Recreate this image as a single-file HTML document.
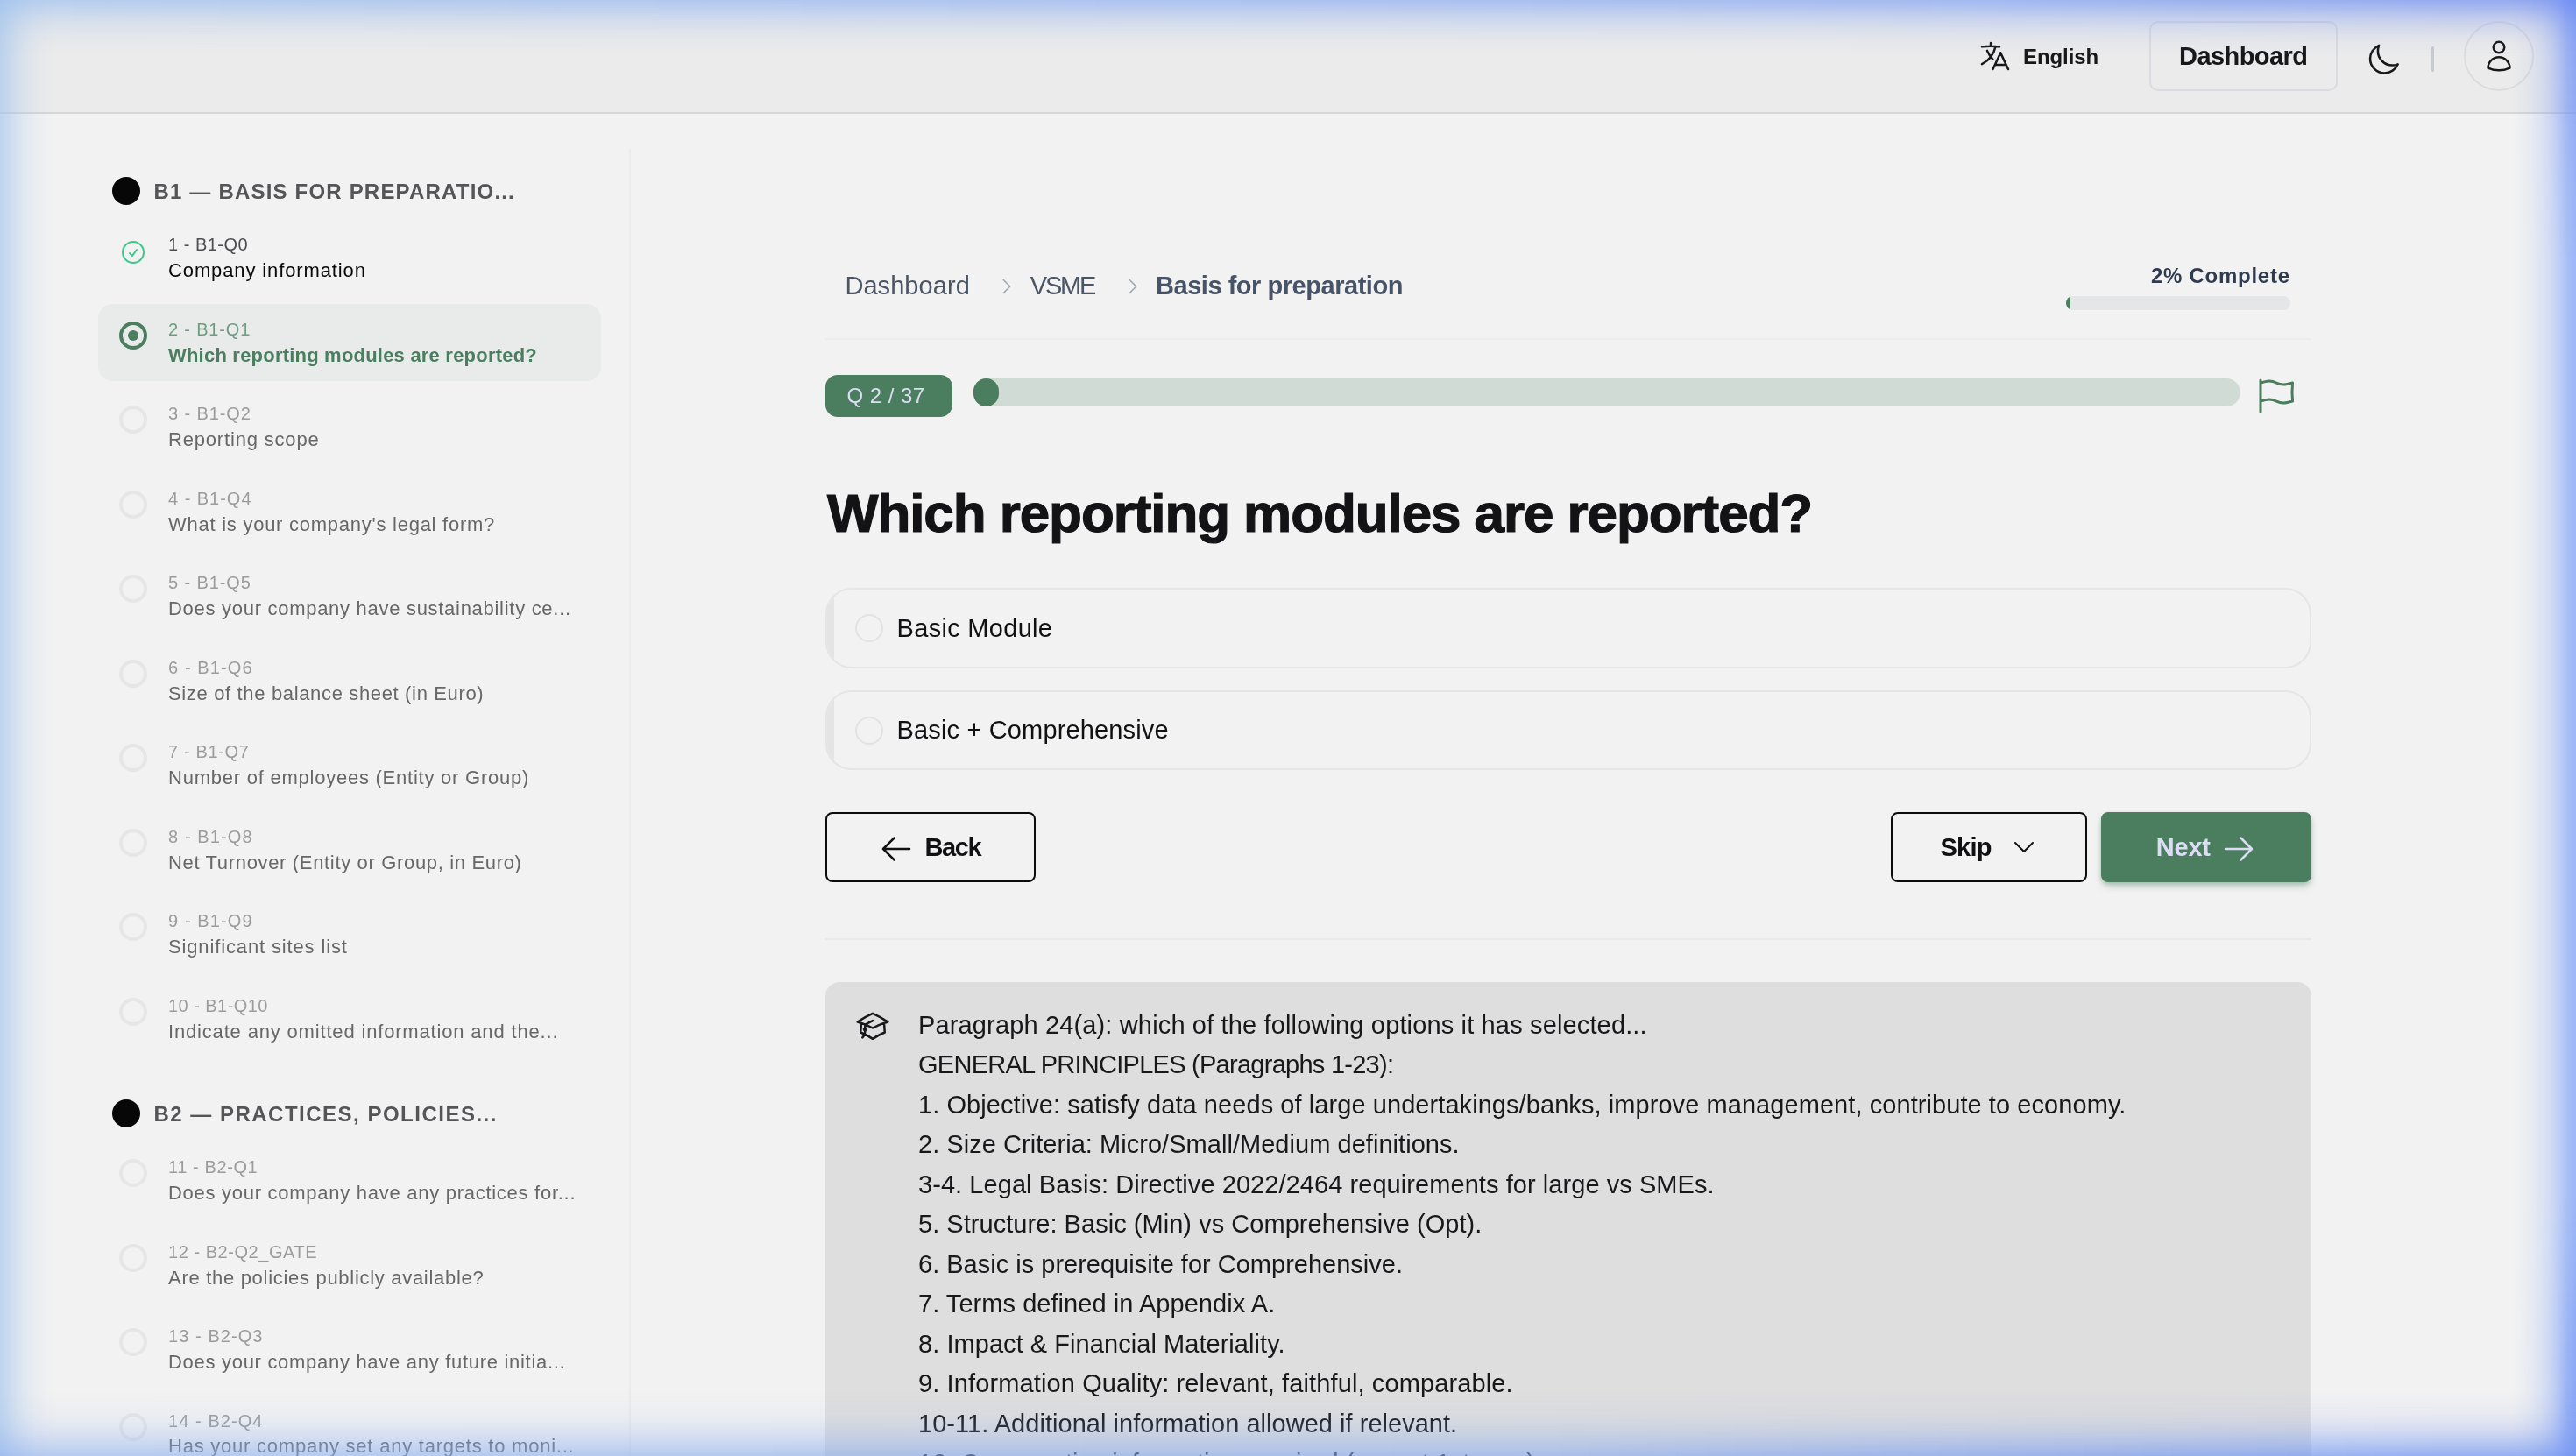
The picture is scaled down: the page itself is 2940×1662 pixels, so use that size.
<!DOCTYPE html>
<html lang="en">
<head>
<meta charset="utf-8">
<title>VSME – Basis for preparation</title>
<style>
*{box-sizing:border-box;margin:0;padding:0}
html,body{width:2940px;height:1662px;overflow:hidden}
html{background:#f2f2f2}
@media (max-width:1600px){html{zoom:.5}}
body{opacity:.9999;background:#f2f2f2;font-family:"Liberation Sans",Arial,sans-serif;color:#111;position:relative}
svg{display:block;fill:none;stroke:currentColor;stroke-linecap:round;stroke-linejoin:round;stroke-width:1.5}
.abs{position:absolute}
.t{position:absolute;white-space:nowrap}

/* header */
#hdr{position:absolute;left:0;top:0;width:2940px;height:130px;background:#ebebeb;border-bottom:2px solid #d6d6d9}
#lang{left:2310px;top:49px;font-size:24px;font-weight:700;color:#18181b;line-height:30px}
#dashbtn{position:absolute;left:2453px;top:24px;width:215px;height:80px;border:2px solid #dadbe0;border-radius:10px}
#dashtxt{left:2488px;top:46px;font-size:29px;font-weight:700;color:#18181b;line-height:36px}
#vsep{position:absolute;left:2775px;top:53px;width:3px;height:29px;background:#c6c9d6;border-radius:2px}
#avatar{position:absolute;left:2812px;top:24px;width:80px;height:80px;border:2px solid #dcdcde;border-radius:50%}

/* sidebar */
#sideline{position:absolute;left:718px;top:170px;width:2px;height:1500px;background:#ebebeb}
.sec{position:absolute;left:128px;width:32px;height:32px;border-radius:50%;background:#070707}
.sect{left:176px;font-size:24px;font-weight:700;color:#555558;line-height:32px}
.it{position:absolute;left:112px;width:574px;height:88px;border-radius:16px}
.it.on{background:#e9ebea}
.it .c{position:absolute;left:24px;top:20px;width:32px;height:32px;border-radius:50%;border:4px solid #e6e6e6}
.it.on .c{border-color:#4b7d5f}
.it.on .c:after{content:"";position:absolute;left:6px;top:6px;width:12px;height:12px;border-radius:50%;background:#4b7d5f}
.it .chk{position:absolute;left:24px;top:22px;width:32px;height:32px;color:#3ec78b}
.k{left:192px;font-size:20px;line-height:30px;color:#9c9c9c}
.q{left:192px;font-size:22px;line-height:32px;color:#676767}
.k.done{color:#4e4e52}
.q.done{color:#0a0a0a}
.k.on{color:#6f9c82}
.q.on{color:#4b7d5f;font-weight:700}

/* main */
.crumb{font-size:29px;line-height:36px;color:#4b5563;top:307px}
.hr{position:absolute;left:942px;width:1696px;height:2px;background:#e8e8e8}
#badge{position:absolute;left:942px;top:428px;width:145px;height:48px;border-radius:14px;background:#4b7d5f}
#badget{left:966px;top:437px;font-size:24px;line-height:30px;color:#dcdcf5;font-weight:400}
#bar{position:absolute;left:1111px;top:432px;width:1446px;height:32px;border-radius:16px;background:#d1dbd5}
#barfill{position:absolute;left:0;top:0;width:29px;height:32px;border-radius:16px;background:#4b7d5f}
#title{left:942px;top:549.5px;font-size:62px;line-height:76px;font-weight:700;color:#131316;-webkit-text-stroke:1.2px #131316}
.opt{position:absolute;left:942px;width:1696px;height:91.5px;border:2px solid #e5e5e5;border-radius:30px;overflow:hidden}
.opt .bar{position:absolute;left:0;top:0;width:8px;height:100%;background:#e4e4e4}
.opt .r{position:absolute;left:32px;top:28px;width:32px;height:32px;border-radius:50%;border:2px solid #e2e2e2}
.optt{left:1025px;font-size:29px;line-height:36px;color:#111114}
.btn{position:absolute;top:927px;height:80px;border:2px solid #0c0c0c;border-radius:8px}
.btnt{font-size:29px;line-height:36px;font-weight:700;color:#111114;top:950px}
#nextb{background:#4b7d5f;border-color:#4b7d5f;box-shadow:0 6px 10px -2px rgba(75,125,95,.35),0 2px 4px rgba(75,125,95,.25)}
#panel{position:absolute;left:942px;top:1121px;width:1696px;height:600px;border-radius:16px;background:#dedede}
.pl{left:1049px;font-size:29px;line-height:45.5px;color:#18181b}

/* glow */


.g{position:absolute;pointer-events:none}
#gT{left:0;top:0;width:2940px;height:64px;background:linear-gradient(to right,rgba(162,194,239,.7),rgba(144,174,242,.75) 68%,rgba(119,148,240,.74) 96%);-webkit-mask-image:linear-gradient(to bottom,rgba(0,0,0,1) 0px,rgba(0,0,0,0.76) 10px,rgba(0,0,0,0.5) 20px,rgba(0,0,0,0.3) 30px,rgba(0,0,0,0.15) 40px,rgba(0,0,0,0.06) 50px,rgba(0,0,0,0) 64px);mask-image:linear-gradient(to bottom,rgba(0,0,0,1) 0px,rgba(0,0,0,0.76) 10px,rgba(0,0,0,0.5) 20px,rgba(0,0,0,0.3) 30px,rgba(0,0,0,0.15) 40px,rgba(0,0,0,0.06) 50px,rgba(0,0,0,0) 64px)}
#gL{left:0;top:0;width:64px;height:1662px;background:rgba(155,192,237,.6);-webkit-mask-image:linear-gradient(to right,rgba(0,0,0,1) 0px,rgba(0,0,0,0.76) 10px,rgba(0,0,0,0.5) 20px,rgba(0,0,0,0.3) 30px,rgba(0,0,0,0.15) 40px,rgba(0,0,0,0.06) 50px,rgba(0,0,0,0) 64px);mask-image:linear-gradient(to right,rgba(0,0,0,1) 0px,rgba(0,0,0,0.76) 10px,rgba(0,0,0,0.5) 20px,rgba(0,0,0,0.3) 30px,rgba(0,0,0,0.15) 40px,rgba(0,0,0,0.06) 50px,rgba(0,0,0,0) 64px)}
#gR{right:0;top:0;width:72px;height:1662px;background:linear-gradient(to bottom,rgba(100,135,245,.72),rgba(110,151,249,.65) 18%,rgba(110,151,249,.65) 82%,rgba(100,138,246,.78));-webkit-mask-image:linear-gradient(to left,rgba(0,0,0,1) 0px,rgba(0,0,0,0.85) 10px,rgba(0,0,0,0.58) 20px,rgba(0,0,0,0.37) 30px,rgba(0,0,0,0.22) 40px,rgba(0,0,0,0.12) 50px,rgba(0,0,0,0.05) 60px,rgba(0,0,0,0) 72px);mask-image:linear-gradient(to left,rgba(0,0,0,1) 0px,rgba(0,0,0,0.85) 10px,rgba(0,0,0,0.58) 20px,rgba(0,0,0,0.37) 30px,rgba(0,0,0,0.22) 40px,rgba(0,0,0,0.12) 50px,rgba(0,0,0,0.05) 60px,rgba(0,0,0,0) 72px)}
#gB{left:0;bottom:0;width:2940px;height:74px;background:linear-gradient(to right,rgba(140,175,239,.58),rgba(135,170,240,.6) 60%,rgba(115,150,242,.72) 95%);-webkit-mask-image:linear-gradient(to top,rgba(0,0,0,1) 0px,rgba(0,0,0,0.76) 10px,rgba(0,0,0,0.53) 20px,rgba(0,0,0,0.33) 30px,rgba(0,0,0,0.19) 40px,rgba(0,0,0,0.1) 50px,rgba(0,0,0,0.05) 60px,rgba(0,0,0,0) 74px);mask-image:linear-gradient(to top,rgba(0,0,0,1) 0px,rgba(0,0,0,0.76) 10px,rgba(0,0,0,0.53) 20px,rgba(0,0,0,0.33) 30px,rgba(0,0,0,0.19) 40px,rgba(0,0,0,0.1) 50px,rgba(0,0,0,0.05) 60px,rgba(0,0,0,0) 74px)}
</style>
</head>
<body>

<!-- HEADER -->
<div id="hdr">
  <svg class="abs" style="left:2257px;top:44px;color:#18181b" width="40" height="40" viewBox="0 0 24 24"><path d="m10.5 21 5.25-11.25L21 21m-9-3h7.5M3 5.621a48.474 48.474 0 0 1 6-.371m0 0c1.12 0 2.233.038 3.334.114M9 5.25V3m3.334 2.364C11.176 10.658 7.69 15.08 3 17.502m9.334-12.138c.896.061 1.785.147 2.666.257m-4.589 8.495a18.023 18.023 0 0 1-3.827-5.802"/></svg>
  <div class="t" id="lang" style="left:2309.00px;letter-spacing:-0.079px;margin-top:1.00px;">English</div>
  <div id="dashbtn"></div>
  <div class="t" id="dashtxt" style="left:2487.00px;letter-spacing:-0.561px;">Dashboard</div>
  <svg class="abs" style="left:2699.5px;top:47.9px;color:#18181b" width="40.5" height="40.5" viewBox="0 0 24 24"><path d="M21.752 15.002A9.72 9.72 0 0 1 18 15.75c-5.385 0-9.75-4.365-9.75-9.75 0-1.33.266-2.597.748-3.752A9.753 9.753 0 0 0 3 11.25C3 16.635 7.365 21 12.75 21a9.753 9.753 0 0 0 9.002-5.998Z"/></svg>
  <div id="vsep"></div>
  <div id="avatar"></div>
  <svg class="abs" style="left:2832px;top:44px;color:#18181b" width="40" height="40" viewBox="0 0 24 24"><path d="M15.75 6a3.75 3.75 0 1 1-7.5 0 3.75 3.75 0 0 1 7.5 0ZM4.501 20.118a7.5 7.5 0 0 1 14.998 0A17.933 17.933 0 0 1 12 21.75c-2.676 0-5.216-.584-7.499-1.632Z"/></svg>
</div>

<!-- SIDEBAR -->
<div id="sideline"></div>
<div class="sec" style="top:202px"></div><div class="t sect" id="sec1" style="top:202px;left:175.40px;letter-spacing:1.194px;margin-top:1.00px;">B1 — BASIS FOR PREPARATIO...</div>
<div class="it done" style="top:250px"><svg class="chk" viewBox="0 0 24 24"><path d="M9 12.75 11.25 15 15 9.75M21 12a9 9 0 1 1-18 0 9 9 0 0 1 18 0Z"/></svg></div><div class="t k done" id="k0" style="top:264px;left:192.00px;letter-spacing:0.500px;">1 - B1-Q0</div><div class="t q done" id="q0" style="top:292px;left:192.00px;letter-spacing:0.877px;margin-top:1.00px;">Company information</div>
<div class="it on" style="top:347px"><div class="c"></div></div><div class="t k on" id="k1" style="top:361px;left:192.00px;letter-spacing:0.825px;">2 - B1-Q1</div><div class="t q on" id="q1" style="top:389px;left:192.00px;letter-spacing:0.210px;margin-top:1.00px;">Which reporting modules are reported?</div>
<div class="it " style="top:443px"><div class="c"></div></div><div class="t k " id="k2" style="top:457px;left:192.00px;letter-spacing:0.900px;">3 - B1-Q2</div><div class="t q " id="q2" style="top:485px;left:192.00px;letter-spacing:0.820px;margin-top:1.00px;">Reporting scope</div>
<div class="it " style="top:540px"><div class="c"></div></div><div class="t k " id="k3" style="top:554px;left:192.00px;letter-spacing:0.975px;">4 - B1-Q4</div><div class="t q " id="q3" style="top:582px;left:192.00px;letter-spacing:0.743px;margin-top:1.00px;">What is your company's legal form?</div>
<div class="it " style="top:636px"><div class="c"></div></div><div class="t k " id="k4" style="top:650px;left:192.00px;letter-spacing:0.900px;">5 - B1-Q5</div><div class="t q " id="q4" style="top:678px;left:192.00px;letter-spacing:0.711px;margin-top:1.00px;">Does your company have sustainability ce...</div>
<div class="it " style="top:733px"><div class="c"></div></div><div class="t k " id="k5" style="top:747px;left:192.00px;letter-spacing:1.100px;">6 - B1-Q6</div><div class="t q " id="q5" style="top:775px;left:192.00px;letter-spacing:0.652px;margin-top:1.00px;">Size of the balance sheet (in Euro)</div>
<div class="it " style="top:829px"><div class="c"></div></div><div class="t k " id="k6" style="top:843px;left:192.00px;letter-spacing:0.650px;">7 - B1-Q7</div><div class="t q " id="q6" style="top:871px;left:192.00px;letter-spacing:0.760px;margin-top:1.00px;">Number of employees (Entity or Group)</div>
<div class="it " style="top:926px"><div class="c"></div></div><div class="t k " id="k7" style="top:940px;left:192.00px;letter-spacing:1.100px;">8 - B1-Q8</div><div class="t q " id="q7" style="top:968px;left:192.00px;letter-spacing:0.660px;margin-top:1.00px;">Net Turnover (Entity or Group, in Euro)</div>
<div class="it " style="top:1022px"><div class="c"></div></div><div class="t k " id="k8" style="top:1036px;left:192.00px;letter-spacing:1.100px;">9 - B1-Q9</div><div class="t q " id="q8" style="top:1064px;left:192.00px;letter-spacing:0.859px;margin-top:1.00px;">Significant sites list</div>
<div class="it " style="top:1119px"><div class="c"></div></div><div class="t k " id="k9" style="top:1133px;left:192.00px;letter-spacing:0.455px;">10 - B1-Q10</div><div class="t q " id="q9" style="top:1161px;left:192.00px;letter-spacing:0.829px;margin-top:1.00px;">Indicate any omitted information and the...</div>
<div class="sec" style="top:1255px"></div><div class="t sect" id="sec2" style="top:1255px;left:175.40px;letter-spacing:1.498px;margin-top:1.00px;">B2 — PRACTICES, POLICIES...</div>
<div class="it " style="top:1303px"><div class="c"></div></div><div class="t k " id="k10" style="top:1317px;left:192.00px;letter-spacing:0.595px;">11 - B2-Q1</div><div class="t q " id="q10" style="top:1345px;left:192.00px;letter-spacing:0.724px;margin-top:1.00px;">Does your company have any practices for...</div>
<div class="it " style="top:1400px"><div class="c"></div></div><div class="t k " id="k11" style="top:1414px;left:192.00px;letter-spacing:0.541px;">12 - B2-Q2_GATE</div><div class="t q " id="q11" style="top:1442px;left:192.00px;letter-spacing:0.703px;margin-top:1.00px;">Are the policies publicly available?</div>
<div class="it " style="top:1496px"><div class="c"></div></div><div class="t k " id="k12" style="top:1510px;left:192.00px;letter-spacing:1.075px;">13 - B2-Q3</div><div class="t q " id="q12" style="top:1538px;left:192.00px;letter-spacing:0.704px;margin-top:1.00px;">Does your company have any future initia...</div>
<div class="it " style="top:1593px"><div class="c"></div></div><div class="t k " id="k13" style="top:1607px;left:192.00px;letter-spacing:1.075px;">14 - B2-Q4</div><div class="t q " id="q13" style="top:1635px;left:192.00px;letter-spacing:0.769px;">Has your company set any targets to moni...</div>

<!-- MAIN -->
<div class="t crumb" id="cr1" style="left:966px;left:964.40px;letter-spacing:0.066px;margin-top:1.00px;">Dashboard</div>
<svg class="abs" style="left:1137px;top:315px;color:#9ca3af" width="24" height="24" viewBox="0 0 24 24"><path d="m8.25 4.5 7.5 7.5-7.5 7.5"/></svg>
<div class="t crumb" id="cr2" style="left:1175px;left:1175.80px;letter-spacing:-2.196px;margin-top:1.00px;">VSME</div>
<svg class="abs" style="left:1281px;top:315px;color:#9ca3af" width="24" height="24" viewBox="0 0 24 24"><path d="m8.25 4.5 7.5 7.5-7.5 7.5"/></svg>
<div class="t crumb" id="cr3" style="left:1320px;font-weight:700;color:#475467;left:1319.00px;letter-spacing:-0.464px;margin-top:1.00px;">Basis for preparation</div>

<div class="t" id="pct" style="left:2462px;top:299px;font-size:24px;line-height:30px;font-weight:700;color:#2f3b4e;left:2455.00px;letter-spacing:0.730px;margin-top:1.00px;">2% Complete</div>
<div class="abs" style="left:2358px;top:338px;width:256px;height:16px;border-radius:8px;background:#e5e6e8;overflow:hidden"><div style="width:5.3px;height:16px;background:#4b7d5f"></div></div>

<div class="hr" style="top:386px;background:#ececec"></div>

<div id="badge"></div><div class="t" id="badget" style="left:966.40px;letter-spacing:0.487px;">Q 2 / 37</div>
<div id="bar"><div id="barfill"></div></div>
<svg class="abs" style="left:2573.5px;top:428px;color:#4b7d5f" width="48" height="48" viewBox="0 0 24 24"><path d="M3 3v1.5M3 21v-6m0 0 2.77-.693a9 9 0 0 1 6.208.682l.108.054a9 9 0 0 0 6.086.71l3.114-.732a48.524 48.524 0 0 1-.005-10.499l-3.11.732a9 9 0 0 1-6.085-.711l-.108-.054a9 9 0 0 0-6.208-.682L3 4.5M3 15V4.5"/></svg>

<div class="t" id="title" style="left:944.00px;letter-spacing:-1.088px;margin-top:-2.00px;">Which reporting modules are reported?</div>

<div class="opt" style="top:671px"><div class="bar"></div><div class="r"></div></div>
<div class="t optt" id="opt1" style="top:699px;left:1023.60px;letter-spacing:0.301px;">Basic Module</div>
<div class="opt" style="top:787.5px;height:91px"><div class="bar"></div><div class="r"></div></div>
<div class="t optt" id="opt2" style="top:815px;left:1023.60px;letter-spacing:0.146px;">Basic + Comprehensive</div>

<div class="btn" style="left:942px;width:240px"></div>
<svg class="abs" style="left:1003px;top:949px;color:#111114" width="40" height="40" viewBox="0 0 24 24"><path d="M10.5 19.5 3 12m0 0 7.5-7.5M3 12h18"/></svg>
<div class="t btnt" id="back" style="left:1056px;left:1055.40px;letter-spacing:-1.376px;margin-top:-1.00px;">Back</div>

<div class="btn" style="left:2158px;width:224px"></div>
<div class="t btnt" id="skip" style="left:2215px;left:2214.60px;letter-spacing:-0.817px;margin-top:-1.00px;">Skip</div>
<svg class="abs" style="left:2294px;top:951px;color:#111114" width="32" height="32" viewBox="0 0 24 24"><path d="m19.5 8.25-7.5 7.5-7.5-7.5"/></svg>

<div class="btn" id="nextb" style="left:2398px;width:240px"></div>
<div class="t btnt" id="next" style="left:2461px;color:#dcdcf5;left:2460.80px;letter-spacing:-0.220px;margin-top:-1.00px;">Next</div>
<svg class="abs" style="left:2535px;top:949px;color:#dcdcf5" width="40" height="40" viewBox="0 0 24 24"><path d="M13.5 4.5 21 12m0 0-7.5 7.5M21 12H3"/></svg>

<div class="hr" style="top:1071px"></div>

<div id="panel"></div>
<svg class="abs" style="left:976px;top:1151px;color:#18181b" width="40" height="40" viewBox="0 0 24 24"><path d="M4.26 10.147a60.438 60.438 0 0 0-.491 6.347A48.62 48.62 0 0 1 12 20.904a48.62 48.62 0 0 1 8.232-4.41 60.46 60.46 0 0 0-.491-6.347m-15.482 0a50.636 50.636 0 0 0-2.658-.813A59.906 59.906 0 0 1 12 3.493a59.903 59.903 0 0 1 10.399 5.84c-.896.248-1.783.52-2.658.814m-15.482 0A50.717 50.717 0 0 1 12 13.489a50.702 50.702 0 0 1 7.74-3.342M6.75 15a.75.75 0 1 0 0-1.5.75.75 0 0 0 0 1.5Zm0 0v-3.675A55.378 55.378 0 0 1 12 8.443m-7.007 11.55A5.981 5.981 0 0 0 6.75 15.75v-1.5"/></svg>
<div class="t pl" id="p0" style="top:1147.0px;left:1048.00px;letter-spacing:0.146px;margin-top:1.00px;">Paragraph 24(a): which of the following options it has selected...</div>
<div class="t pl" id="p1" style="top:1192.5px;left:1048.00px;letter-spacing:-0.736px;">GENERAL PRINCIPLES (Paragraphs 1-23):</div>
<div class="t pl" id="p2" style="top:1238.0px;left:1048.00px;letter-spacing:0.069px;margin-top:1.00px;">1. Objective: satisfy data needs of large undertakings/banks, improve management, contribute to economy.</div>
<div class="t pl" id="p3" style="top:1283.5px;left:1048.00px;letter-spacing:0.040px;">2. Size Criteria: Micro/Small/Medium definitions.</div>
<div class="t pl" id="p4" style="top:1329.0px;left:1048.00px;letter-spacing:0.064px;margin-top:1.00px;">3-4. Legal Basis: Directive 2022/2464 requirements for large vs SMEs.</div>
<div class="t pl" id="p5" style="top:1374.5px;left:1048.00px;letter-spacing:0.041px;">5. Structure: Basic (Min) vs Comprehensive (Opt).</div>
<div class="t pl" id="p6" style="top:1420.0px;left:1048.00px;letter-spacing:0.003px;margin-top:1.00px;">6. Basic is prerequisite for Comprehensive.</div>
<div class="t pl" id="p7" style="top:1465.5px;left:1048.00px;letter-spacing:0.049px;">7. Terms defined in Appendix A.</div>
<div class="t pl" id="p8" style="top:1511.0px;left:1048.00px;letter-spacing:0.052px;margin-top:1.00px;">8. Impact &amp; Financial Materiality.</div>
<div class="t pl" id="p9" style="top:1556.5px;left:1048.00px;letter-spacing:0.119px;">9. Information Quality: relevant, faithful, comparable.</div>
<div class="t pl" id="p10" style="top:1602.0px;left:1048.00px;letter-spacing:0.031px;margin-top:1.00px;">10-11. Additional information allowed if relevant.</div>
<div class="t pl" id="p11" style="top:1647.5px;left:1048.00px;letter-spacing:0.022px;">12. Comparative information required (except 1st year).</div>

<div id="glow"><div class="g" id="gT"></div><div class="g" id="gL"></div><div class="g" id="gR"></div><div class="g" id="gB"></div></div>
</body>
</html>
